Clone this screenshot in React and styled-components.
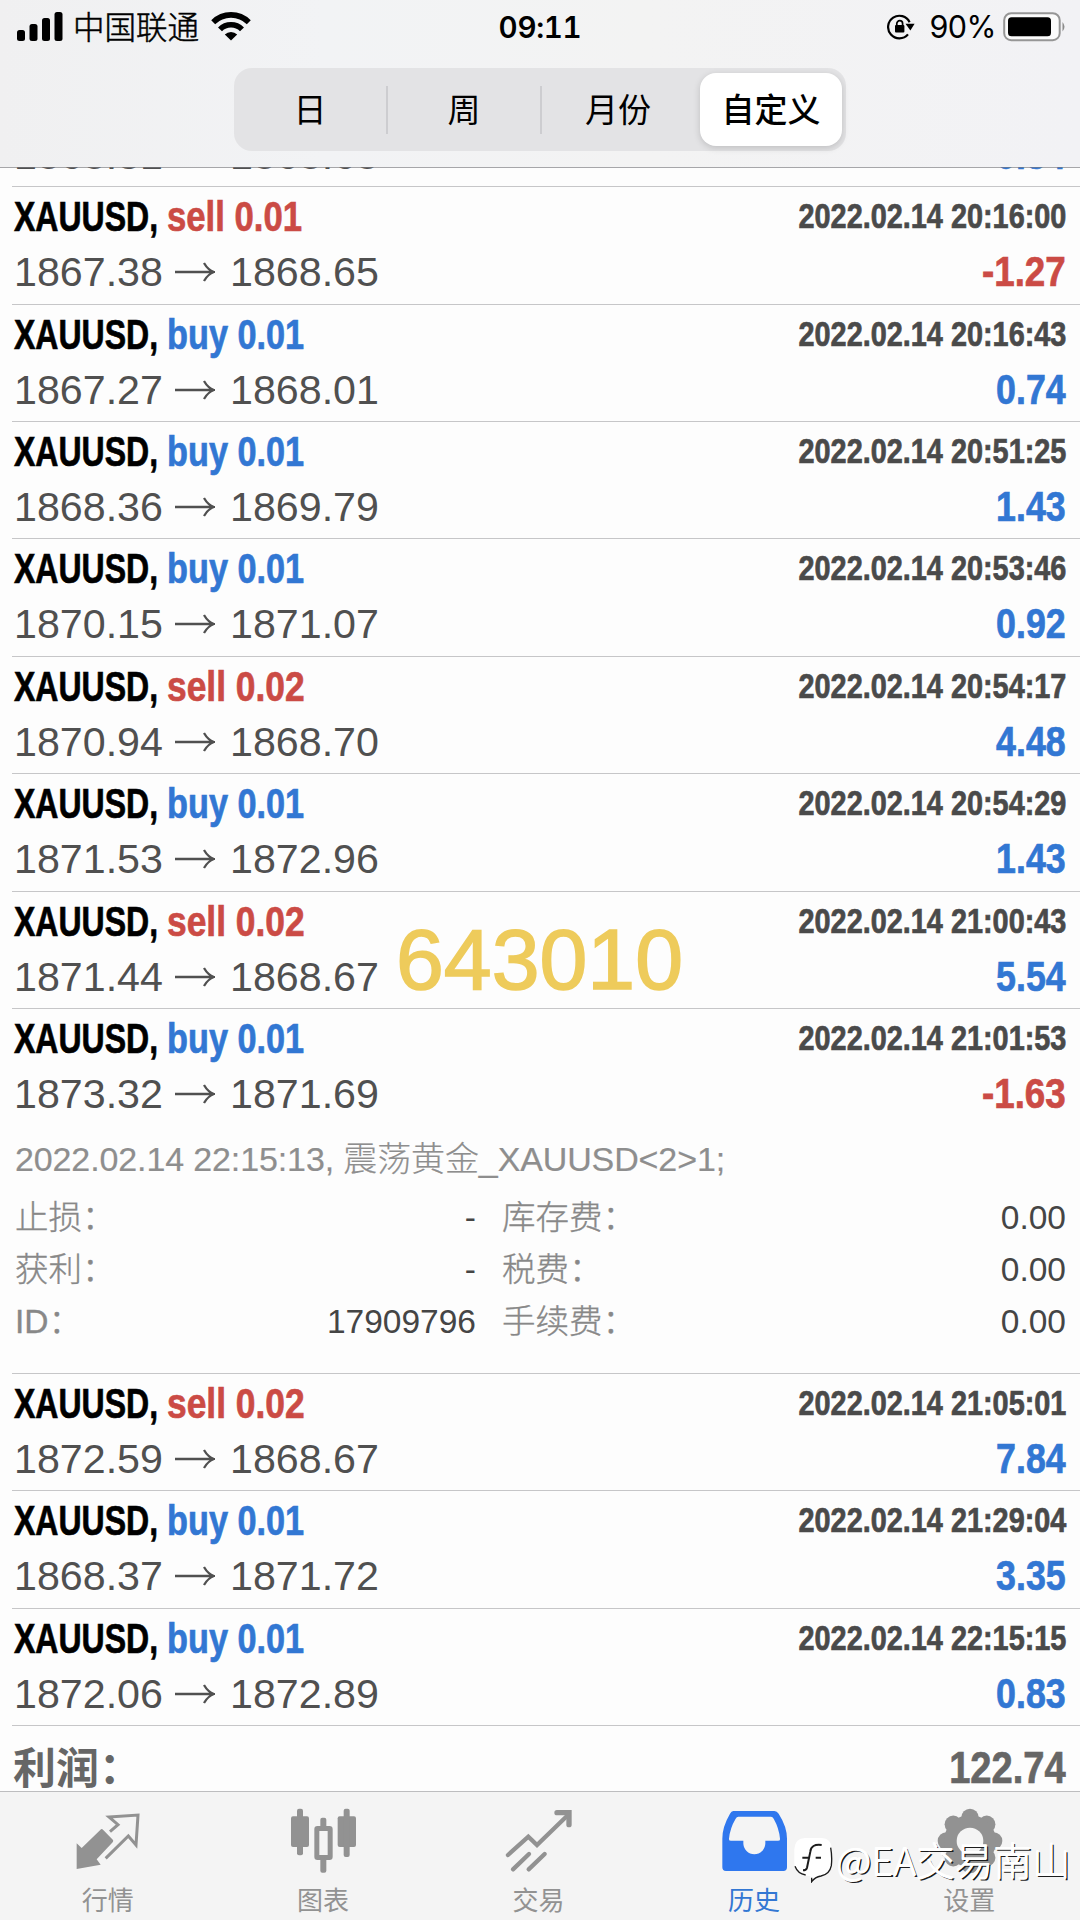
import React from "react";
import styled, { createGlobalStyle } from "styled-components";

const BLUE = "#3277d3";
const RED = "#cb4b45";
const SANS = '"Liberation Sans", "Noto Sans CJK SC", sans-serif';
const CJK = '"Noto Sans CJK SC", sans-serif';

const Global = createGlobalStyle`
  html, body { margin: 0; padding: 0; }
  body { background: #fdfdfd; font-family: ${SANS}; }
  * { box-sizing: border-box; }
`;

const Screen = styled.main`
  position: relative;
  width: 1080px;
  height: 1920px;
  overflow: hidden;
  display: flex;
  flex-direction: column;
  background: #fdfdfd;
`;

/* ---------- header ---------- */
const Header = styled.header`
  position: relative;
  z-index: 1;
  flex: none;
  height: 168px;
  display: flex;
  flex-direction: column;
  background: linear-gradient(90deg, #f0f0f1, #f2f3f5 30%, #f3f3f3 60%, #f2f2f5);
  background-clip: padding-box;
  border-bottom: 1px solid rgba(120, 120, 124, 0.65);
`;

const StatusBar = styled.div`
  height: 55px;
  display: grid;
  grid-template-columns: 1fr auto 1fr;
  align-items: center;
  padding: 0 14px 2px 17px;
  color: #000;
`;

const StatusGroup = styled.div`
  display: flex;
  align-items: center;
  justify-content: ${(p) => (p.$end ? "flex-end" : "flex-start")};
`;

const Carrier = styled.span`
  margin: 0 12px 3px 10px;
  font: 300 31.5px/40px ${CJK};
  -webkit-text-stroke: 0.5px #000;
`;

const Clock = styled.span`
  font: 600 29.5px/40px Inter, sans-serif;
  font-feature-settings: "tnum";
  letter-spacing: -0.3px;
  padding-right: 3px;
`;

const Percent = styled.span`
  margin: 0 7px 0 14px;
  font: 400 30.5px/40px Inter, sans-serif;
  letter-spacing: -0.5px;
`;

const Segments = styled.nav`
  align-self: center;
  width: 612px;
  height: 83px;
  margin-top: 13px;
  padding: 5px 4px 5px 0;
  display: flex;
  align-items: stretch;
  border-radius: 18px;
  background: #e3e3e5;
`;

const Segment = styled.button`
  flex: ${(p) => (p.$active ? "0 0 142px" : "1 1 0")};
  margin-left: ${(p) => (p.$active ? "6px" : "0")};
  border: 0;
  padding: 0 0 4px;
  display: flex;
  align-items: center;
  justify-content: center;
  border-radius: 16px;
  background: ${(p) => (p.$active ? "#fff" : "transparent")};
  box-shadow: ${(p) => (p.$active ? "0 2px 7px rgba(0,0,0,.16)" : "none")};
  color: #000;
  font: ${(p) => (p.$active ? 500 : 400)} 33px/40px ${CJK};
`;

const SegmentRule = styled.i`
  flex: none;
  width: 2px;
  height: 48px;
  align-self: center;
  background: #cdcdd0;
`;

/* ---------- deals ---------- */
const List = styled.section`
  flex: 1;
  min-height: 0;
  margin-top: -1px;
  overflow: hidden;
`;

const Deals = styled.div`
  margin-top: -98.2px;
`;

const Deal = styled.article`
  height: ${(p) => (p.$open ? 365 : 117.4)}px;
  margin-left: 12px;
  padding: 0 14px 0 2px;
  border-top: 1px solid #c6c6c8;
`;

const Line = styled.div`
  display: flex;
  justify-content: space-between;
  align-items: center;
  height: ${(p) => p.$h}px;
  line-height: ${(p) => p.$h}px;
  white-space: nowrap;
`;

const Condensed = styled.span`
  display: inline-block;
  width: ${(p) => (p.$w ? `${p.$w}px` : "auto")};
  font-weight: 700;
  font-size: ${(p) => p.$size}px;
  color: ${(p) => p.$color};
  transform: scaleX(${(p) => p.$x});
  transform-origin: ${(p) => (p.$right ? "right" : "left")} center;
  -webkit-text-stroke: 0.7px currentColor;
`;

const Title = styled.div`
  display: flex;
`;

const Prices = styled.div`
  display: flex;
  align-items: center;
  font-size: 41.2px;
  color: #505050;
`;

const Price = styled.span`
  width: 161px;
`;

const ArrowIcon = styled.svg`
  width: 40px;
  height: 22px;
  margin: 0 15px 0 0;
`;

const Comment = styled.p`
  margin: 13px 0 7px;
  height: 52px;
  line-height: 52px;
  font-size: 34px;
  font-weight: 300;
  letter-spacing: -0.12px;
  color: #8e8e8e;
  padding-left: 1px;
  white-space: nowrap;
  -webkit-text-stroke: 0.2px currentColor;
`;

const Facts = styled.dl`
  margin: 0;
  display: grid;
  grid-template-columns: 462px 1fr;
  column-gap: 25px;
`;

const Fact = styled.div`
  display: flex;
  justify-content: space-between;
  height: 52px;
  line-height: 52px;
  padding-left: 1px;
`;

const FactLabel = styled.dt`
  font-size: 33.5px;
  font-weight: 300;
  color: #888;
  -webkit-text-stroke: 0.35px currentColor;
`;

const FactValue = styled.dd`
  margin: 0;
  font-size: 33.5px;
  color: #454545;
`;

const Total = styled.footer`
  display: flex;
  justify-content: space-between;
  margin-left: 12px;
  padding: 0 14px 0 1px;
  height: 90px;
  line-height: 84px;
  border-top: 1px solid #c6c6c8;
  color: #666;
`;

const TotalLabel = styled.span`
  font: 700 43px/79px ${CJK};
`;

/* ---------- tab bar ---------- */
const TabBar = styled.nav`
  flex: none;
  height: 129px;
  display: grid;
  grid-template-columns: repeat(5, 1fr);
  padding-right: 3px;
  background: #f4f4f4;
  border-top: 1px solid #bdbdbf;
`;

const Tab = styled.a`
  display: flex;
  flex-direction: column;
  align-items: center;
  padding-top: 14px;
  color: ${(p) => (p.$active ? BLUE : "#929292")};
  font: 400 26px/34px ${CJK};
`;

const TabIcon = styled.svg`
  width: 70px;
  height: 70px;
  margin-bottom: 6px;
  fill: currentColor;
`;

/* ---------- overlays ---------- */
const CodeStamp = styled.div`
  position: absolute;
  left: 396px;
  top: 910px;
  font-size: 86px;
  line-height: 98px;
  color: #eecb5b;
  -webkit-text-stroke: 1.6px #eecb5b;
`;

const Author = styled.div`
  position: absolute;
  left: 793px;
  top: 1832px;
  display: flex;
  align-items: center;
  font: 300 38.6px/48px ${CJK};
  color: #fff;
  white-space: nowrap;
  text-shadow: 0.6px 0 0 #fff, 0 0.6px 0 #fff, 1.8px 1.8px 0 #1c1c1c;
`;

const AuthorLogo = styled.svg`
  width: 40px;
  height: 46px;
  margin: 5px 3px 0 0;
`;

const deals = [
  ["buy 0.01", "", "1868.31", "1868.65", "0.34"],
  ["sell 0.01", "20:16:00", "1867.38", "1868.65", "-1.27"],
  ["buy 0.01", "20:16:43", "1867.27", "1868.01", "0.74"],
  ["buy 0.01", "20:51:25", "1868.36", "1869.79", "1.43"],
  ["buy 0.01", "20:53:46", "1870.15", "1871.07", "0.92"],
  ["sell 0.02", "20:54:17", "1870.94", "1868.70", "4.48"],
  ["buy 0.01", "20:54:29", "1871.53", "1872.96", "1.43"],
  ["sell 0.02", "21:00:43", "1871.44", "1868.67", "5.54"],
  ["buy 0.01", "21:01:53", "1873.32", "1871.69", "-1.63", true],
  ["sell 0.02", "21:05:01", "1872.59", "1868.67", "7.84"],
  ["buy 0.01", "21:29:04", "1868.37", "1871.72", "3.35"],
  ["buy 0.01", "22:15:15", "1872.06", "1872.89", "0.83"],
];

const facts = [
  ["止损：", "-"],
  ["库存费：", "0.00"],
  ["获利：", "-"],
  ["税费：", "0.00"],
  ["ID：", "17909796"],
  ["手续费：", "0.00"],
];

function DealRow({ deal }) {
  const [side, time, open, close, profit, expanded] = deal;
  const sell = side.startsWith("sell");
  const loss = profit.startsWith("-");
  return (
    <Deal $open={expanded}>
      {time ? (
        <Line $h={59}>
          <Title>
            <Condensed $size={43.4} $x={0.738} $w={153} $color="#000">XAUUSD,</Condensed>
            <Condensed $size={43.4} $x={side === "sell 0.02" ? 0.815 : sell ? 0.8 : 0.79} $color={sell ? RED : BLUE}>{side}</Condensed>
          </Title>
          <Condensed $right $size={34.5} $x={0.836} $color="#4a4a4a">2022.02.14 {time}</Condensed>
        </Line>
      ) : (
        <Line $h={59} />
      )}
      <Line $h={52}>
        <Prices>
          <Price>{open}</Price>
          <ArrowIcon viewBox="0 0 40 22" fill="none" stroke="currentColor" strokeWidth="2.3">
            <path d="M0 11H38M29 2Q33 9 39 11Q33 13 29 20" />
          </ArrowIcon>
          <Price>{close}</Price>
        </Prices>
        <Condensed $right $size={42} $x={loss ? 0.875 : 0.852} $color={loss ? RED : BLUE}>{profit}</Condensed>
      </Line>
      {expanded && (
        <>
          <Comment>{"2022.02.14 22:15:13, 震荡黄金_XAUUSD<2>1;"}</Comment>
          <Facts>
            {facts.map(([label, value]) => (
              <Fact key={label}>
                <FactLabel>{label}</FactLabel>
                <FactValue>{value}</FactValue>
              </Fact>
            ))}
          </Facts>
        </>
      )}
    </Deal>
  );
}

const SignalIcon = () => (
  <svg width="46" height="29" viewBox="0 0 46 29">
    <rect x="0" y="18" width="8" height="11" rx="2.5" />
    <rect x="12.5" y="12" width="8" height="17" rx="2.5" />
    <rect x="25" y="6" width="8" height="23" rx="2.5" />
    <rect x="37.5" y="0" width="8" height="29" rx="2.5" />
  </svg>
);

const WifiIcon = () => (
  <svg width="40" height="30" viewBox="0 0 40 30" fill="none" stroke="#000" strokeWidth="5.6">
    <path d="M2.2 10.2A25.2 25.2 0 0 1 37.8 10.2" />
    <path d="M9 17.4A15.5 15.5 0 0 1 31 17.4" />
    <path d="M20 28.5L13.8 22.6A8.8 8.8 0 0 1 26.2 22.6Z" fill="#000" stroke="none" />
  </svg>
);

const LockIcon = () => (
  <svg width="28" height="26" viewBox="0 0 28 26" fill="none" stroke="#000" strokeWidth="2.2">
    <path d="M22.6 8.2A11.3 11.3 0 1 0 21 20.4" />
    <path d="M18.5 9.8H27.6L23.4 16.4Z" fill="#000" stroke="none" />
    <rect x="8" y="11" width="9.4" height="7.6" rx="1" fill="#000" stroke="none" />
    <path d="M9.8 11.5V9.6A2.9 2.9 0 0 1 15.6 9.6V11.5" strokeWidth="1.7" />
  </svg>
);

const BatteryIcon = () => (
  <svg width="63" height="30" viewBox="0 0 63 30">
    <rect x="1.2" y="1.2" width="55.5" height="27" rx="7" fill="#fbfbfb" stroke="#969696" strokeWidth="2" />
    <rect x="5" y="5.2" width="43" height="19" rx="3.5" />
    <path d="M59.5 10Q63.5 14.7 59.5 19.5Z" fill="#8b8b8b" />
  </svg>
);

const teeth = Array.from({ length: 8 }, (_, i) => {
  const a = (i * Math.PI) / 4;
  return [108 + 71 * Math.cos(a), 105 + 71 * Math.sin(a)];
});

const tabs = [
  ["行情", <g key="i">
    <path d="M11 112L26 126L84 70Q87 68 90 71L120 102Q122 105 119 109L71 160L83 176L11 189Z" />
    <path d="M111 77L135 56L108 33L195 27L189 117L166 90L98 157" fill="none" stroke="currentColor" strokeWidth="9" />
  </g>],
  ["图表", <g key="i">
    <rect x="9" y="31" width="54" height="92" rx="6" />
    <rect x="27" y="8" width="18" height="140" rx="6" />
    <rect x="86.5" y="67.5" width="40" height="87" rx="2" fill="none" stroke="currentColor" strokeWidth="15" />
    <rect x="97" y="35" width="18" height="32" rx="6" />
    <rect x="97" y="155" width="18" height="45" rx="6" />
    <rect x="149" y="31" width="55" height="92" rx="6" />
    <rect x="167" y="8" width="18" height="145" rx="6" />
  </g>],
  ["交易", <g key="i" fill="none" stroke="currentColor" strokeWidth="13" strokeLinecap="round">
    <path d="M15 147L76 92L102 117L195 27" />
    <path d="M162 20H198V56" strokeWidth="16" />
    <path d="M30 190L78 144M77 190L125 144" />
  </g>],
  ["历史", <path key="i" fill="#2f77ee" fillRule="evenodd" d="M43 15H166Q174 15 179 23Q204 62 204 98V184Q204 195 193 195H21Q10 195 10 184V98Q10 62 33 23Q37 15 43 15ZM58 32Q53 32 50 38Q33 66 30 98Q29 104 36 104H73V112A33 33 0 0 0 139 112V104H177Q184 104 183 98Q180 66 164 38Q161 32 156 32Z" />],
  ["设置", <g key="i">
    {teeth.map(([x, y]) => <circle key={`${x}-${y}`} cx={x} cy={y} r="26" />)}
    <circle cx="108" cy="105" r="78" />
    <circle cx="108" cy="105" r="40" fill="#f4f4f4" />
  </g>],
];

export default function App() {
  return (
    <Screen>
      <Global />
      <Header>
        <StatusBar>
          <StatusGroup>
            <SignalIcon />
            <Carrier>中国联通</Carrier>
            <WifiIcon />
          </StatusGroup>
          <Clock>09:11</Clock>
          <StatusGroup $end>
            <LockIcon />
            <Percent>90%</Percent>
            <BatteryIcon />
          </StatusGroup>
        </StatusBar>
        <Segments>
          <Segment>日</Segment>
          <SegmentRule />
          <Segment>周</Segment>
          <SegmentRule />
          <Segment>月份</Segment>
          <Segment $active>自定义</Segment>
        </Segments>
      </Header>
      <List>
        <Deals>
          {deals.map((deal, i) => <DealRow key={i} deal={deal} />)}
        </Deals>
        <Total>
          <TotalLabel>利润：</TotalLabel>
          <Condensed $right $size={44} $x={0.865} $color="#666">122.74</Condensed>
        </Total>
      </List>
      <TabBar>
        {tabs.map(([label, icon]) => (
          <Tab key={label} $active={label === "历史"}>
            <TabIcon viewBox="0 0 210 210">{icon}</TabIcon>
            {label}
          </Tab>
        ))}
      </TabBar>
      <CodeStamp>643010</CodeStamp>
      <Author>
        <AuthorLogo viewBox="0 0 120 138">
          <path d="M36 3H84Q116 4 116 36V84Q114 112 84 116Q66 118 56 134L52 117Q8 114 4 80V36Q6 4 36 3Z" fill="#fff" />
          <path d="M113 32Q118 60 115 86Q110 112 84 117Q66 120 56 134V122M6 88Q14 110 38 114" fill="none" stroke="#1c1c1c" strokeWidth="4" />
          <path d="M86 24Q54 20 52 44L42 92Q40 100 30 100M28 62H50M68 62H84" fill="none" stroke="#1c1c1c" strokeWidth="6" />
        </AuthorLogo>
        @EA交易南山
      </Author>
    </Screen>
  );
}
